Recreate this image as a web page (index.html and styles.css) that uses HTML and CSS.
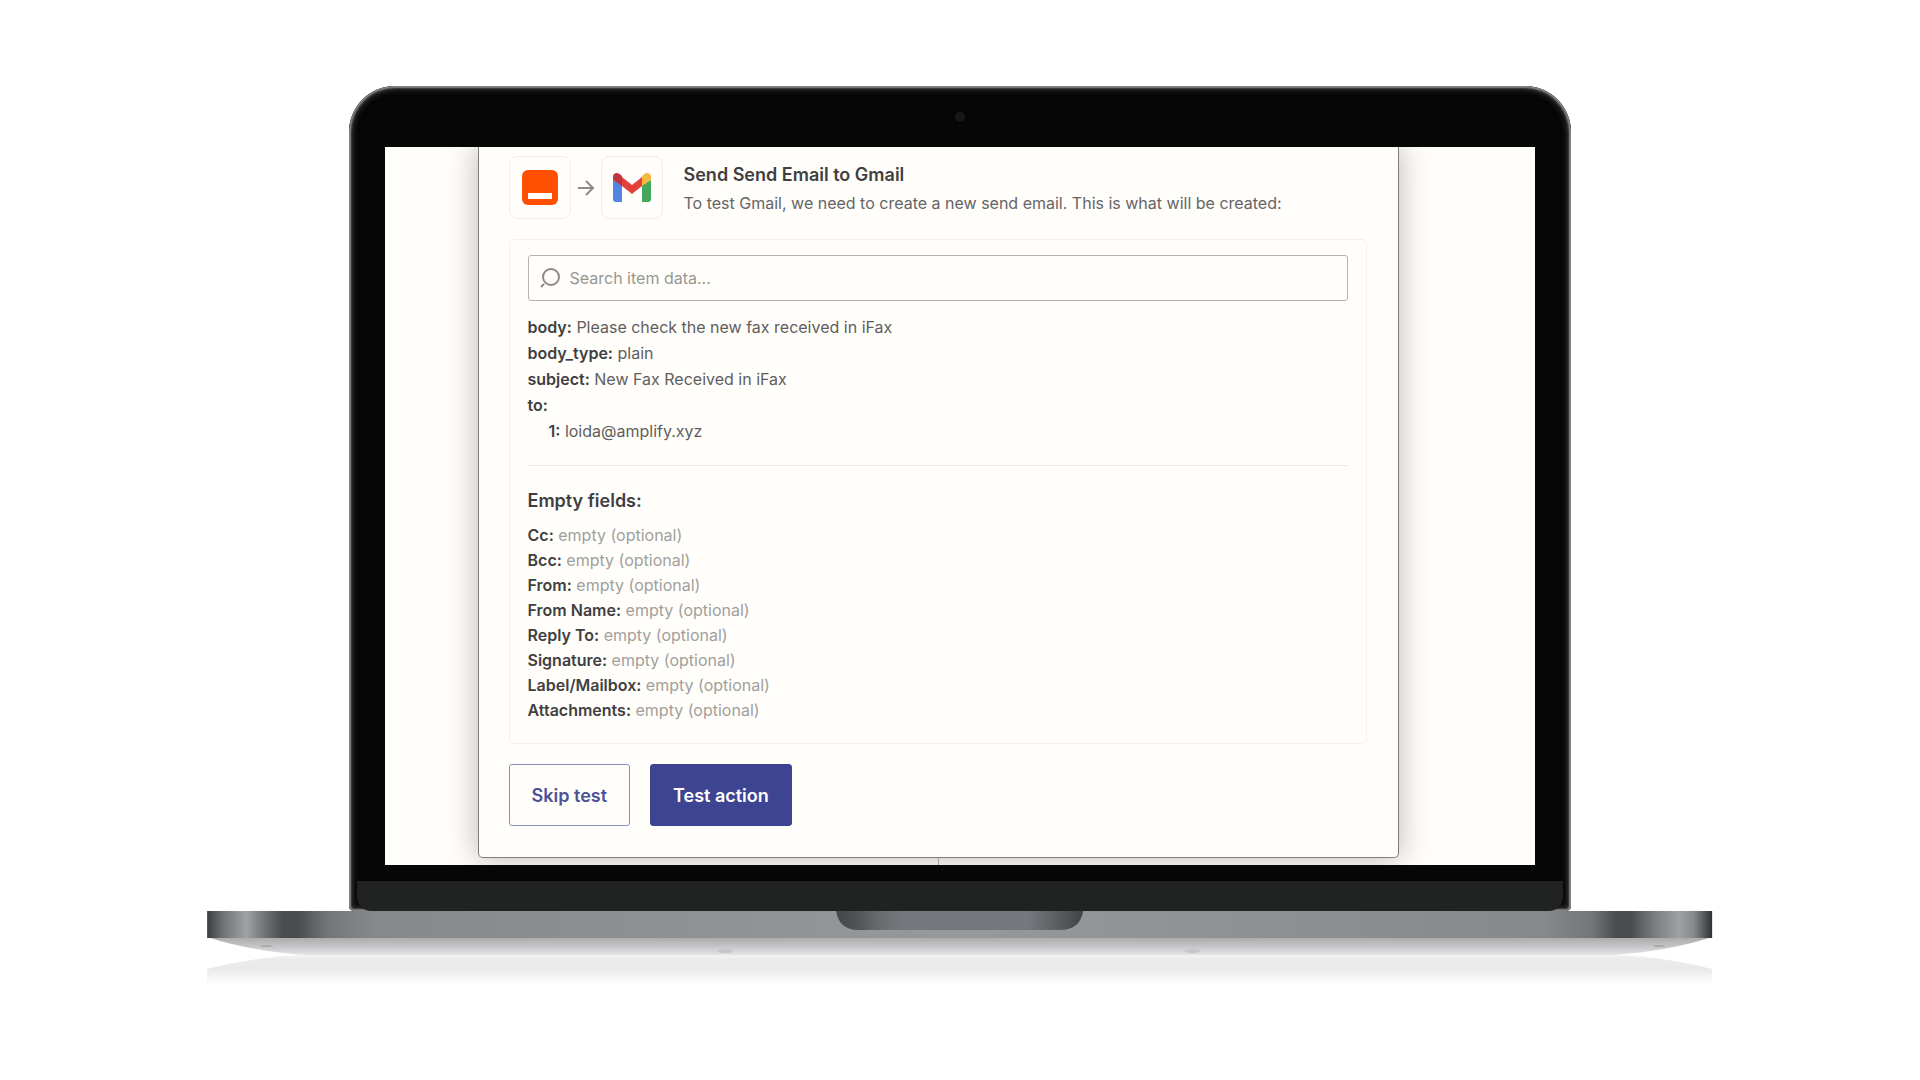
FILE: index.html
```
<!DOCTYPE html>
<html lang="en">
<head>
  <meta charset="UTF-8" />
  <meta name="viewport" content="width=device-width, initial-scale=1.0" />
  <title>Send Email to Gmail</title>
  <link rel="stylesheet" href="styles.css">
</head>
<body>
  <div class="laptop">
    <div class="lid">
      <div class="camera"></div>
      <div class="screen">
        <main class="dialog">
          <header class="dialog-header">
            <div class="app-icon">
              <svg width="36" height="36" viewBox="0 0 36 36">
                <rect x="0" y="0" width="36" height="35" rx="6" fill="#ff4f00" />
                <rect x="6" y="23" width="24" height="6" fill="#fffdf9" />
              </svg>
            </div>
            <svg class="arrow" width="18" height="18" viewBox="0 0 18 18" fill="none" stroke="#8d8b88" stroke-width="2">
              <path d="M1 9H16M9 2L16 9L9 16" />
            </svg>
            <div class="app-icon">
              <svg width="38" height="29" viewBox="0 0 38 29">
                <path d="M0 7L9 12V29H3Q0 29 0 26Z" fill="#5485e4" />
                <path d="M29 12L38 7V26Q38 29 35 29H29Z" fill="#43a75c" />
                <path d="M9 4L19 12L29 4V13L19 21L9 13Z" fill="#e3403a" />
                <path d="M0 4Q0 0 4 0Q6 0 9 3V13L0 7Z" fill="#be3540" />
                <path d="M38 4Q38 0 34 0Q32 0 29 3V13L38 7Z" fill="#f6b93f" />
              </svg>
            </div>
            <div class="heading">
              <h1>Send Send Email to Gmail</h1>
              <p>To test Gmail, we need to create a new send email. This is what will be created:</p>
            </div>
          </header>

          <section class="card">
            <div class="search">
              <svg width="20" height="20" viewBox="0 0 20 20" fill="none" stroke="#8d8b88" stroke-width="2">
                <circle cx="11" cy="9" r="8" />
                <path d="M4 16L1 19" />
              </svg>
              <input type="text" id="search" aria-label="Search item data" placeholder="Search item data..." />
            </div>
            <ul class="fields">
              <li><b>body:</b> Please check the new fax received in iFax</li>
              <li><b>body_type:</b> plain</li>
              <li><b>subject:</b> New Fax Received in iFax</li>
              <li><b>to:</b></li>
              <li class="nested"><b>1:</b> loida@amplify.xyz</li>
            </ul>
            <hr>
            <h2>Empty fields:</h2>
            <ul class="empty-fields">
              <li><b>Cc:</b> empty (optional)</li>
              <li><b>Bcc:</b> empty (optional)</li>
              <li><b>From:</b> empty (optional)</li>
              <li><b>From Name:</b> empty (optional)</li>
              <li><b>Reply To:</b> empty (optional)</li>
              <li><b>Signature:</b> empty (optional)</li>
              <li><b>Label/Mailbox:</b> empty (optional)</li>
              <li><b>Attachments:</b> empty (optional)</li>
            </ul>
          </section>

          <div class="actions">
            <button type="button" class="skip-btn">Skip test</button>
            <button type="button" class="test-btn">Test action</button>
          </div>
        </main>
        <div class="connector"></div>
      </div>
      <div class="chin"></div>
    </div>

    <svg class="base" viewBox="0 0 1505 84">
      <defs>
        <linearGradient id="metal">
          <stop offset="0" stop-color="#3c3d40" />
          <stop offset="0.012" stop-color="#77787b" />
          <stop offset="0.026" stop-color="#a0a1a4" />
          <stop offset="0.04" stop-color="#6c6d6f" />
          <stop offset="0.05" stop-color="#4b4c4e" />
          <stop offset="0.06" stop-color="#4b4c4e" />
          <stop offset="0.08" stop-color="#747578" />
          <stop offset="0.11" stop-color="#87888b" />
          <stop offset="0.5" stop-color="#97989b" />
          <stop offset="0.89" stop-color="#87888b" />
          <stop offset="0.92" stop-color="#747578" />
          <stop offset="0.936" stop-color="#4b4c4e" />
          <stop offset="0.946" stop-color="#4b4c4e" />
          <stop offset="0.962" stop-color="#7c7d80" />
          <stop offset="0.978" stop-color="#a0a1a4" />
          <stop offset="0.988" stop-color="#87888b" />
          <stop offset="1" stop-color="#303134" />
        </linearGradient>
        <linearGradient id="notch">
          <stop offset="0" stop-color="#454648" />
          <stop offset="0.08" stop-color="#4f5153" />
          <stop offset="0.16" stop-color="#66696c" />
          <stop offset="0.26" stop-color="#74787c" />
          <stop offset="0.78" stop-color="#74787c" />
          <stop offset="0.9" stop-color="#5a5d60" />
          <stop offset="1" stop-color="#404143" />
        </linearGradient>
        <linearGradient id="underside" x2="0" y2="1">
          <stop offset="0" stop-color="#a9a9aa" />
          <stop offset="0.5" stop-color="#c4c4c6" />
          <stop offset="1" stop-color="#e4e4e8" />
        </linearGradient>
        <linearGradient id="reflection" x2="0" y2="1">
          <stop offset="0" stop-color="#f3f3f4" />
          <stop offset="0.15" stop-color="#ebebeb" />
          <stop offset="0.45" stop-color="#e9e9e9" />
          <stop offset="0.7" stop-color="#f4f4f4" />
          <stop offset="1" stop-color="#ffffff" />
        </linearGradient>
      </defs>
      <path d="M0 58Q42 47 90 44H1415Q1463 47 1505 58V75H0Z" fill="url(#reflection)" />
      <path d="M0 26H1505Q1463 40 1405 44H100Q42 40 0 26Z" fill="url(#underside)" />
      <rect width="1505" height="27" fill="url(#metal)" />
      <path d="M629 0H876Q873 19 853 19H651Q632 19 629 0Z" fill="url(#notch)" />
      <ellipse cx="518" cy="40" rx="8" ry="2" fill="#c6c6c8" />
      <ellipse cx="985" cy="40" rx="8" ry="2" fill="#c6c6c8" />
      <ellipse cx="59" cy="35" rx="6" ry="1" fill="#a9a9ab" />
      <ellipse cx="1452" cy="35" rx="6" ry="1" fill="#a9a9ab" />
    </svg>
  </div>
</body>
</html>
```
FILE: styles.css
```
body {
  font-family: Inter, sans-serif;
  margin: 0;
  padding: 86px 0 0;
  background-color: #ffffff;
  color: #413f42;
}

h1,
h2,
p,
ul {
  margin: 0;
  padding: 0;
}

ul {
  list-style: none;
}

b {
  font-weight: 600;
}

/* Laptop */
.laptop {
  display: flex;
  flex-direction: column;
  align-items: center;
}

.lid {
  box-sizing: border-box;
  width: 63.6%;
  padding: 0 8px;
  border-radius: 46px 46px 5px 5px;
  background-color: #060606;
  box-shadow: inset 0 0 2px 2px #8b8c8f, inset 0 0 4px 5px #242625;
}

.camera {
  width: 10px;
  height: 10px;
  margin: 26px auto 25px;
  border-radius: 50%;
  background-color: #17181a;
}

.screen {
  display: grid;
  grid-template-columns: 92fr 921fr 135fr;
  margin: 0 28px;
  overflow: hidden;
  background-color: #fffefa;
}

.chin {
  height: 30px;
  margin-top: 16px;
  border-radius: 0 0 14px 14px;
  background-color: #212322;
}

.base {
  display: block;
  width: 78.4%;
}

/* Dialog */
.dialog {
  grid-column: 2;
  padding: 9px 31px 31px 30px;
  border: 1px solid #7d7c7a;
  border-top: none;
  border-radius: 0 0 5px 5px;
  background-color: #fffefa;
  box-shadow: 0 0 30px 2px rgba(0, 0, 0, 0.25);
}

.connector {
  grid-column: 2;
  width: 50%;
  height: 7px;
  border-right: 1px solid #a5a4a1;
}

.dialog-header {
  display: flex;
  align-items: center;
}

.app-icon {
  display: flex;
  justify-content: center;
  align-items: center;
  width: 60px;
  height: 61px;
  border: 1px solid #f1efec;
  border-radius: 8px;
}

.arrow {
  margin: 0 6px;
}

.heading {
  margin-left: 21px;
  padding-top: 2px;
}

.heading h1 {
  font-size: 18px;
  line-height: 28px;
  font-weight: 600;
}

.heading p {
  font-size: 16px;
  line-height: 28px;
  color: #666467;
}

.card {
  margin-top: 20px;
  padding: 15px 18px 20px;
  border: 1px solid #f4f2ef;
  border-radius: 5px;
}

.search {
  display: flex;
  align-items: center;
  gap: 10px;
  height: 44px;
  padding: 0 11px;
  border: 1px solid #b5b3b0;
  border-radius: 3px;
}

.search input {
  flex: 1;
  padding: 0;
  border: none;
  outline: none;
  background: none;
  font-family: inherit;
  font-size: 16px;
  color: #413f42;
}

.search input::placeholder {
  color: #989693;
}

.fields {
  margin-top: 13px;
  font-size: 16px;
  line-height: 26px;
  color: #5f5d60;
}

.fields b,
.empty-fields b {
  color: #413f42;
}

.fields .nested {
  padding-left: 21px;
}

hr {
  height: 1px;
  margin: 21px 0;
  border: none;
  background-color: #eae8e5;
}

.card h2 {
  font-size: 18px;
  line-height: 28px;
  font-weight: 600;
}

.empty-fields {
  margin-top: 8px;
  font-size: 16px;
  line-height: 25px;
  color: #a19f9d;
}

.actions {
  display: flex;
  gap: 20px;
  margin-top: 20px;
}

.actions button {
  height: 62px;
  padding: 0 22px;
  border: 1px solid #3d4592;
  border-radius: 3px;
  font-family: inherit;
  font-size: 18px;
  font-weight: 600;
  cursor: pointer;
}

.actions .skip-btn {
  border-color: #8a8fbd;
  background-color: #fffefa;
  color: #4d5299;
}

.actions .test-btn {
  background-color: #3d4592;
  color: #fffefa;
}
```
